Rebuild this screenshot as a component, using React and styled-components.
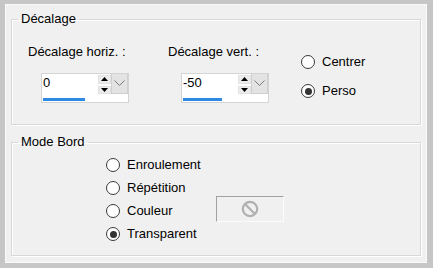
import styled, { createGlobalStyle } from 'styled-components';

const Global = createGlobalStyle`
  html, body { margin: 0; padding: 0; background: #c6c6c6; }
  body { font-family: "Liberation Sans", Arial, sans-serif; font-size: 13px; color: #000; }
`;

const Frame = styled.div`
  width: 433px;
  height: 268px;
  box-sizing: border-box;
  padding: 4px 6px 5px 5px;
  background: #c6c6c6;
`;

const Panel = styled.div`
  height: 100%;
  box-sizing: border-box;
  background: #f0f0f0;
  border: 1px solid #fafafa;
  padding: 7px 5px 0 5px;
  display: flex;
  flex-direction: column;
  gap: 10px;
`;

const Group = styled.fieldset`
  margin: 0;
  padding: 0;
  border: 1px solid #d8d8d8;
  box-shadow: inset 1px 1px 0 #fff, 1px 1px 0 #fff;
  height: ${(p) => p.h}px;
  box-sizing: border-box;
  min-width: 0;
`;

const Legend = styled.legend`
  margin-left: 6px;
  padding: 0 3px;
  line-height: 14px;
`;

const OffsetRow = styled.div`
  display: flex;
  padding: 18px 0 0 16px;
`;

const Field = styled.div`
  width: ${(p) => p.w}px;
  display: flex;
  flex-direction: column;
  gap: 13px;
`;

const Label = styled.div`
  line-height: 16px;
`;

const Spin = styled.div`
  margin-left: 13px;
  width: 88px;
  height: 30px;
  display: flex;
  flex-direction: column;
  border: 1px solid #d4d4d4;
  box-sizing: border-box;
  background: #fff;
`;

const SpinTop = styled.div`
  height: 20px;
  display: flex;
`;

const Value = styled.div`
  flex: 1;
  padding: 1px 0 0 1px;
  line-height: 16px;
`;

const Bar = styled.div`
  margin: 4px 2px 0 1px;
  height: 3px;
  background: #fff;
  div { height: 3px; background: #2e89e4; }
`;

const Arrows = styled.div`
  width: 13px;
  display: flex;
  flex-direction: column;
  gap: 2px;
  padding-top: 1px;
`;

const ArrowBtn = styled.div`
  height: 8px;
  background: #ececec;
  border: 1px solid #e2e2e2;
  display: flex;
  align-items: center;
  justify-content: center;
`;

const Drop = styled.div`
  width: 17px;
  height: 20px;
  box-sizing: border-box;
  background: #e3e3e3;
  border: 1px solid #cfcfcf;
  border-top: none;
  display: flex;
  align-items: center;
  justify-content: center;
`;

const RadioCol = styled.div`
  display: flex;
  flex-direction: column;
  gap: 13px;
  padding-top: 10px;
`;

const RadioItem = styled.label`
  display: flex;
  align-items: center;
  gap: 7px;
  line-height: 16px;
`;

const Circle = styled.span`
  width: 14px;
  height: 14px;
  border: 1px solid #3a3a3a;
  border-radius: 50%;
  background: #fff;
  box-sizing: border-box;
  display: flex;
  align-items: center;
  justify-content: center;
  &::after {
    content: '';
    width: 7px;
    height: 7px;
    border-radius: 50%;
    background: ${(p) => (p.checked ? '#333' : 'transparent')};
  }
`;

const ModeBody = styled.div`
  display: flex;
  padding: 8px 0 0 94px;
`;

const ModeList = styled.div`
  display: flex;
  flex-direction: column;
  gap: 7px;
  width: 110px;
`;

const ColorBtn = styled.div`
  margin-top: 39px;
  width: 68px;
  height: 26px;
  box-sizing: border-box;
  border: 1px solid #fbfbfb;
  border-top-color: #a0a0a0;
  border-left-color: #a0a0a0;
  background: #f0f0f0;
  display: flex;
  align-items: center;
  justify-content: center;
`;

const Radio = ({ checked, children }) => (
  <RadioItem>
    <Circle checked={checked} />
    {children}
  </RadioItem>
);

const SpinBox = ({ value, fill }) => (
  <Spin>
    <SpinTop>
      <Value>{value}</Value>
      <Arrows>
        <ArrowBtn>
          <svg width="7" height="4" viewBox="0 0 7 4"><path d="M0 4L3.5 0L7 4Z" fill="#000" /></svg>
        </ArrowBtn>
        <ArrowBtn>
          <svg width="7" height="4" viewBox="0 0 7 4"><path d="M0 0L3.5 4L7 0Z" fill="#000" /></svg>
        </ArrowBtn>
      </Arrows>
      <Drop>
        <svg width="11" height="7" viewBox="0 0 11 7">
          <path d="M0.5 0.5L5.5 5.5L10.5 0.5" stroke="#7a7a7a" fill="none" />
        </svg>
      </Drop>
    </SpinTop>
    <Bar>
      <div style={{ width: fill + '%' }} />
    </Bar>
  </Spin>
);

export default function App() {
  return (
    <>
      <Global />
      <Frame>
        <Panel>
          <Group h={113}>
            <Legend>Décalage</Legend>
            <OffsetRow>
              <Field w={140}>
                <Label>Décalage horiz. :</Label>
                <SpinBox value="0" fill={51} />
              </Field>
              <Field w={133}>
                <Label>Décalage vert. :</Label>
                <SpinBox value="-50" fill={47} />
              </Field>
              <RadioCol>
                <Radio>Centrer</Radio>
                <Radio checked>Perso</Radio>
              </RadioCol>
            </OffsetRow>
          </Group>
          <Group h={121}>
            <Legend>Mode Bord</Legend>
            <ModeBody>
              <ModeList>
                <Radio>Enroulement</Radio>
                <Radio>Répétition</Radio>
                <Radio>Couleur</Radio>
                <Radio checked>Transparent</Radio>
              </ModeList>
              <ColorBtn>
                <svg width="18" height="18" viewBox="0 0 18 18">
                  <circle cx="9" cy="9" r="7.2" stroke="#b0b0b0" strokeWidth="2.2" fill="none" />
                  <path d="M4 4L14 14" stroke="#b0b0b0" strokeWidth="2.2" />
                </svg>
              </ColorBtn>
            </ModeBody>
          </Group>
        </Panel>
      </Frame>
    </>
  );
}
